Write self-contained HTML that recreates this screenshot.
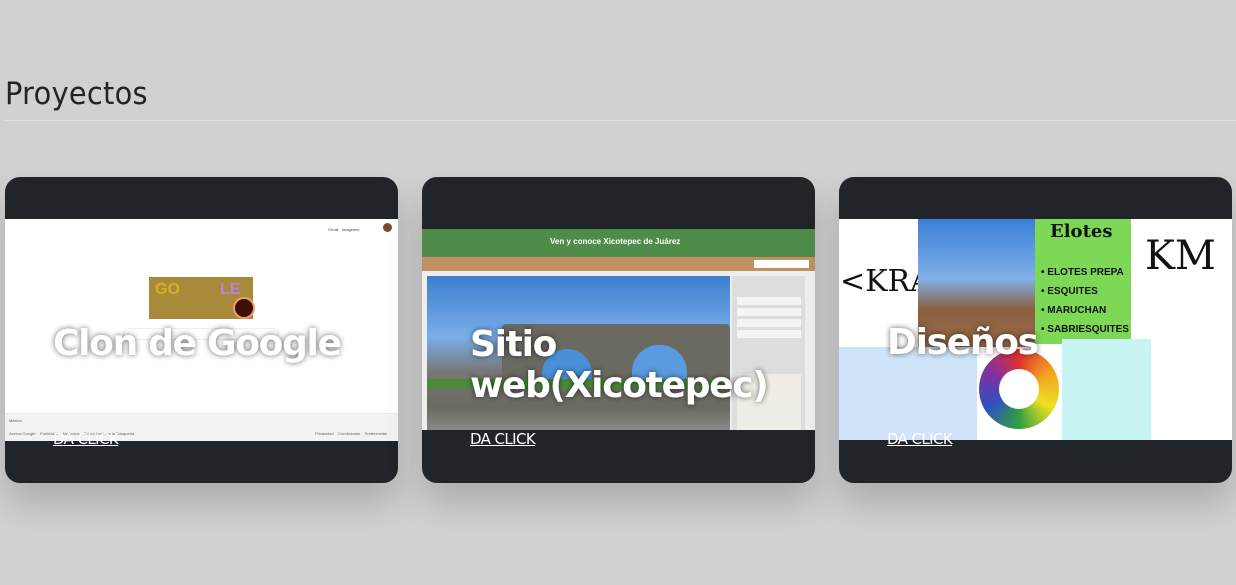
<!DOCTYPE html>
<html><head><meta charset="utf-8"><style>
*{margin:0;padding:0;box-sizing:border-box}
body{width:1236px;height:585px;background:#d1d1d1;font-family:"Liberation Sans","DejaVu Sans",sans-serif;position:relative;overflow:hidden;color:#212529}
h2{position:absolute;left:5px;top:76px;font-size:31px;font-weight:400;color:#212529;letter-spacing:0.3px;font-family:"DejaVu Sans",sans-serif;transform:scaleX(0.93);transform-origin:left}
.hr{position:absolute;left:5px;right:0;top:120px;height:1px;background:#e2e2e2}
.card{position:absolute;top:177px;width:393px;height:306px;background:#212529;border-radius:15px;overflow:hidden;box-shadow:0 20px 35px rgba(0,0,0,.18)}
.img{position:absolute;left:0;width:100%;overflow:hidden}
.t{position:absolute;left:48px;color:#fff;font-weight:700;font-size:36px;line-height:41px;text-shadow:0 0 6px rgba(0,0,0,.6);font-family:"DejaVu Sans","Liberation Sans",sans-serif;letter-spacing:-1.3px}
.a{position:absolute;left:48px;top:253px;color:#fff;font-size:15px;text-decoration:underline;font-family:"DejaVu Sans",sans-serif;letter-spacing:-0.6px}
.b{position:absolute}
</style></head><body>
<h2>Proyectos</h2><div class="hr"></div>

<div class="card" style="left:5px">
 <div class="img" style="top:42px;height:222px;background:#fff">
  <div class="b" style="left:323px;top:8px;font-size:4px;color:#444">Gmail &nbsp; Imágenes</div>
  <div class="b" style="left:378px;top:4px;width:9px;height:9px;border-radius:50%;background:#7a4a2a"></div>
  <div class="b" style="left:144px;top:58px;width:104px;height:42px;background:#a88a3a"></div>
  <div class="b" style="left:150px;top:62px;font-size:16px;font-weight:bold;color:#d8b020">GO</div>
  <div class="b" style="left:215px;top:62px;font-size:16px;font-weight:bold;color:#c080e0">LE</div>
  <div class="b" style="left:228px;top:78px;width:22px;height:22px;border-radius:50%;background:#401008;border:2px solid #f0a070"></div>
  <div class="b" style="left:118px;top:109px;width:156px;height:12px;border-radius:6px;border:1px solid #eee"></div>
  <div class="b" style="left:0;top:194px;width:100%;height:28px;background:#f2f2f2;border-top:1px solid #e8e8e8"></div>
  <div class="b" style="left:4px;top:199px;font-size:4px;color:#555">México</div>
  <div class="b" style="left:4px;top:212px;font-size:4px;color:#666">Acerca Google &nbsp;&nbsp; Publicidad &nbsp;&nbsp; Negocios &nbsp;&nbsp; Cómo funciona la Búsqueda</div>
  <div class="b" style="left:310px;top:212px;font-size:4px;color:#666">Privacidad &nbsp;&nbsp; Condiciones &nbsp;&nbsp; Preferencias</div>
 </div>
 <div class="t" style="top:146px">Clon de Google</div>
 <div class="a">DA CLICK</div>
</div>

<div class="card" style="left:422px">
 <div class="img" style="top:52px;height:201px;background:#eee">
  <div class="b" style="left:0;top:0;width:100%;height:28px;background:#4f8c4a"></div>
  <div class="b" style="left:128px;top:8px;font-size:8px;font-weight:bold;color:#fff">Ven y conoce Xicotepec de Juárez</div>
  <div class="b" style="left:0;top:28px;width:100%;height:14px;background:#c09060"></div>
  <div class="b" style="left:332px;top:31px;width:55px;height:8px;background:#fff"></div>
  <div class="b" style="left:5px;top:47px;width:303px;height:154px;background:linear-gradient(180deg,#3d7fd0 0%,#7aaee8 40%,#777 62%,#6a6a60 85%,#888 100%)"></div>
  <div class="b" style="left:80px;top:95px;width:228px;height:60px;background:#6b6a62;border-radius:4px 4px 0 0"></div>
  <div class="b" style="left:120px;top:120px;width:50px;height:36px;background:#4a90d8;border-radius:25px 25px 0 0"></div>
  <div class="b" style="left:210px;top:116px;width:55px;height:40px;background:#5a9ae0;border-radius:27px 27px 0 0"></div>
  <div class="b" style="left:5px;top:150px;width:303px;height:10px;background:#4a8a3a"></div>
  <div class="b" style="left:310px;top:47px;width:73px;height:154px;background:#ddd"></div>
  <div class="b" style="left:315px;top:68px;width:64px;height:44px;background:repeating-linear-gradient(180deg,#f4f4f4 0 8px,#ddd 8px 11px)"></div>
  <div class="b" style="left:315px;top:145px;width:64px;height:56px;background:#f0ede6"></div>
 </div>
 <div class="t" style="top:147px">Sitio<br>web(Xicotepec)</div>
 <div class="a">DA CLICK</div>
</div>

<div class="card" style="left:839px">
 <div class="img" style="top:42px;height:221px;background:#fff">
  <div class="b" style="left:1px;top:45px;font-size:30px;color:#111;font-family:'DejaVu Serif',serif">&lt;KRA</div>
  <div class="b" style="left:79px;top:0;width:118px;height:150px;background:linear-gradient(180deg,#3a80d8,#80b0e8 40%,#8a6040 60%,#a07050)"></div>
  <div class="b" style="left:196px;top:0;width:96px;height:125px;background:#7dd856"></div>
  <div class="b" style="left:211px;top:2px;font-size:18px;font-weight:bold;font-family:'DejaVu Serif',serif;color:#111">Elotes</div>
  <div class="b" style="left:202px;top:44px;font-size:10px;font-weight:bold;line-height:19px;color:#111">• ELOTES PREPA<br>• ESQUITES<br>• MARUCHAN<br>• SABRIESQUITES</div>
  <div class="b" style="left:306px;top:14px;font-size:40px;color:#111;font-family:'DejaVu Serif',serif">KM</div>
  <div class="b" style="left:0;top:128px;width:138px;height:93px;background:#cfe4f8"></div>
  <div class="b" style="left:138px;top:128px;width:85px;height:93px;background:#fff"></div>
  <div class="b" style="left:140px;top:130px;width:80px;height:80px;border-radius:50%;background:conic-gradient(#e03030,#f0a020,#f0e020,#30a040,#3050c0,#8030a0,#e03030)"></div>
  <div class="b" style="left:160px;top:150px;width:40px;height:40px;border-radius:50%;background:#fff"></div>
  <div class="b" style="left:223px;top:120px;width:89px;height:101px;background:#c8f4f4"></div>
  <div class="b" style="left:312px;top:130px;width:80px;height:91px;background:#fff"></div>
 </div>
 <div class="t" style="top:145px">Diseños</div>
 <div class="a">DA CLICK</div>
</div>
</body></html>
